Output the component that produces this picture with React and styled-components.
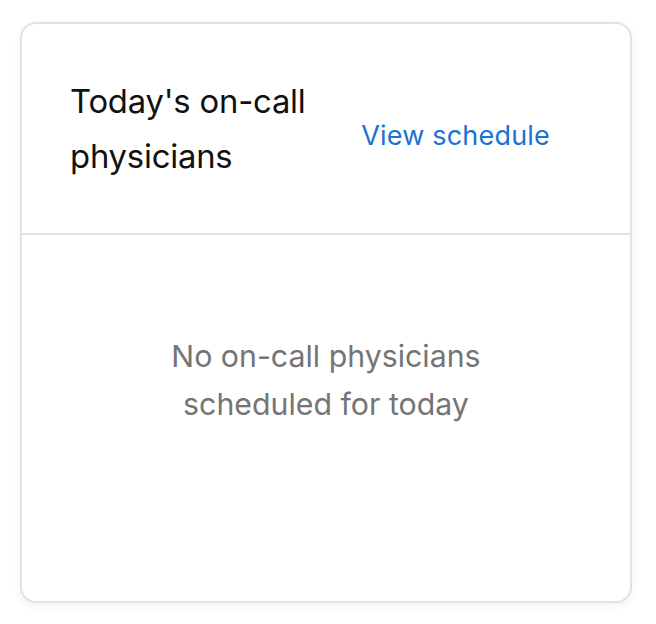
import React from "react";
import styled, { createGlobalStyle } from "styled-components";

const Global = createGlobalStyle`
  html, body { margin: 0; padding: 0; background: #ffffff; }
  body { font-family: Inter, "Noto Sans", sans-serif; -webkit-font-smoothing: antialiased; }
`;

const Page = styled.div`
  padding: 22px 24px 22px 20px;
`;

const Card = styled.section`
  width: 612px;
  height: 581px;
  box-sizing: border-box;
  border: 2px solid #e2e2e2;
  border-radius: 16px;
  background: #fff;
  box-shadow: 0 3px 8px rgba(0, 0, 0, 0.06);
  display: flex;
  flex-direction: column;
  overflow: hidden;
`;

const Header = styled.header`
  height: 211px;
  box-sizing: border-box;
  border-bottom: 2px solid #e2e2e2;
  padding: 0 80px 0 48px;
  display: flex;
  align-items: center;
  justify-content: space-between;
`;

const Title = styled.h2`
  margin: 0;
  width: 270px;
  font-size: 32.8px;
  line-height: 55px;
  font-weight: 400;
  color: #111111;
  letter-spacing: -0.2px;
`;

const Link = styled.a`
  font-size: 27px;
  color: #1a73d1;
  text-decoration: none;
  letter-spacing: 0.2px;
  margin-top: 14px;
`;

const Body = styled.div`
  flex: 1;
  display: flex;
  align-items: center;
  justify-content: center;
  padding-bottom: 76px;
`;

const Empty = styled.p`
  margin: 0;
  text-align: center;
  font-size: 30.3px;
  line-height: 48px;
  color: #757575;
`;

export default function App() {
  return (
    <Page>
      <Global />
      <Card>
        <Header>
          <Title>Today's on-call physicians</Title>
          <Link href="#">View schedule</Link>
        </Header>
        <Body>
          <Empty>
            No on-call physicians
            <br />
            scheduled for today
          </Empty>
        </Body>
      </Card>
    </Page>
  );
}
